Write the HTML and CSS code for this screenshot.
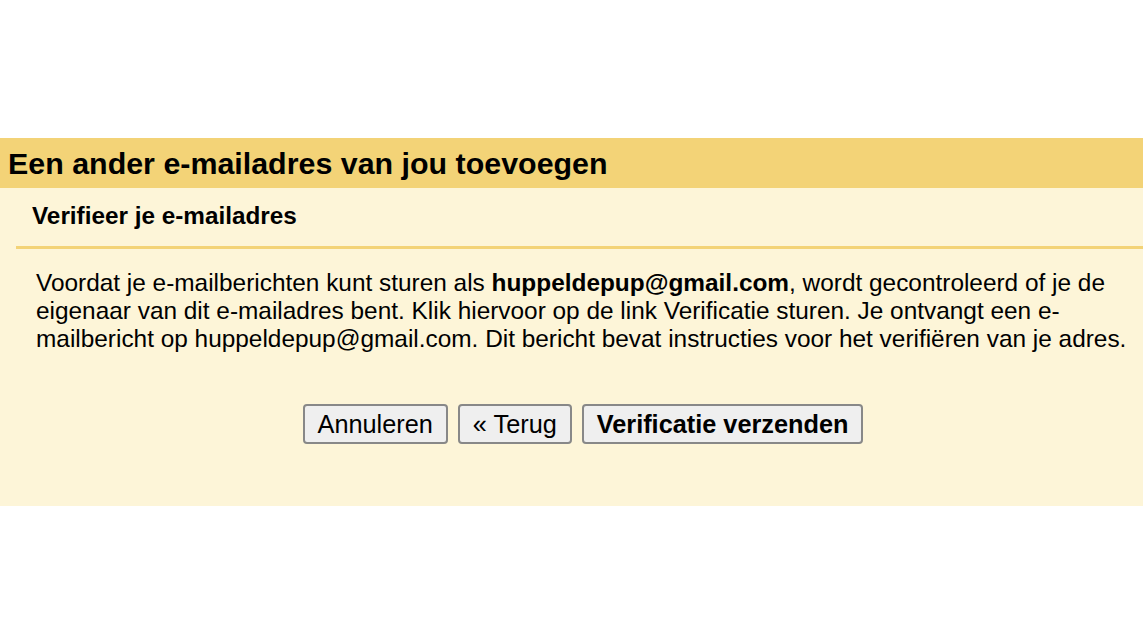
FILE: index.html
```html
<!DOCTYPE html>
<html lang="nl">
<head>
<meta charset="utf-8">
<title>Een ander e-mailadres van jou toevoegen</title>
<link rel="stylesheet" href="styles.css">
</head>
<body>
<div class="dialog">
  <h1 class="dialog-title">Een ander e-mailadres van jou toevoegen</h1>
  <div class="dialog-body">
    <h2 class="step-title">Verifieer je e-mailadres</h2>
    <div class="step-content">
      <p class="message">Voordat je e-mailberichten kunt sturen als <b>huppeldepup@gmail.com</b>, wordt gecontroleerd of je de eigenaar van dit e-mailadres bent. Klik hiervoor op de link Verificatie sturen. Je ontvangt een e-mailbericht op huppeldepup@gmail.com. Dit bericht bevat instructies voor het verifiëren van je adres.</p>
      <div class="actions">
        <button class="btn" type="button">Annuleren</button>
        <button class="btn" type="button">« Terug</button>
        <button class="btn btn-primary" type="button">Verificatie verzenden</button>
      </div>
    </div>
  </div>
</div>
</body>
</html>
```
FILE: styles.css
```css
html, body {
  margin: 0;
  padding: 0;
  background: #ffffff;
  font-family: "Liberation Sans", Arial, sans-serif;
  color: #000;
}

.dialog {
  margin-top: 138px;
}

.dialog-title {
  margin: 0;
  height: 50px;
  line-height: 50px;
  padding-left: 8px;
  background: #f3d377;
  font-size: 30.4px;
  font-weight: bold;
}

.dialog-body {
  background: #fdf5d8;
  padding-bottom: 62px;
}

.step-title {
  margin: 0 0 0 16px;
  padding-left: 16px;
  box-sizing: border-box;
  height: 61px;
  line-height: 56px;
  font-size: 24.3px;
  font-weight: bold;
  border-bottom: 3px solid #f3d377;
}

.step-content {
  padding: 20px 13px 0 36px;
}

.message {
  margin: 0;
  font-size: 24.4px;
  line-height: 28px;
}

.actions {
  display: flex;
  justify-content: center;
  gap: 10px;
  margin-top: 51px;
}

.btn {
  font-family: "Liberation Sans", Arial, sans-serif;
  font-size: 25.3px;
  height: 40px;
  padding: 0 13px;
  background: #efefef;
  border: 2px solid #888;
  border-radius: 4px;
  color: #000;
}

.btn-primary {
  font-weight: bold;
}
```
